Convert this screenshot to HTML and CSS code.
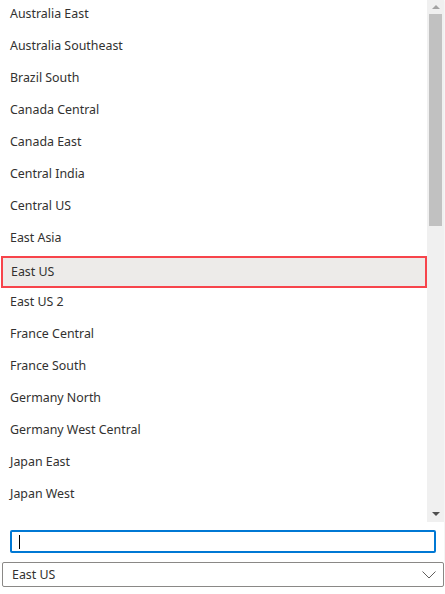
FILE: index.html
```html
<!DOCTYPE html>
<html>
<head>
<meta charset="utf-8">
<link rel="stylesheet" href="styles.css">
</head>
<body>
<div class="panel">
  <div class="listarea">
    <div class="viewport">
      <ul class="list">
        <li class="item">Australia East</li>
        <li class="item">Australia Southeast</li>
        <li class="item">Brazil South</li>
        <li class="item">Canada Central</li>
        <li class="item">Canada East</li>
        <li class="item">Central India</li>
        <li class="item">Central US</li>
        <li class="item">East Asia</li>
        <li class="item selected">East US</li>
        <li class="item">East US 2</li>
        <li class="item">France Central</li>
        <li class="item">France South</li>
        <li class="item">Germany North</li>
        <li class="item">Germany West Central</li>
        <li class="item">Japan East</li>
        <li class="item">Japan West</li>
      </ul>
    </div>
    <div class="scrollbar">
      <div class="arrow up"></div>
      <div class="track"><div class="thumb"></div></div>
      <div class="arrow down"></div>
    </div>
  </div>
  <div class="searchwrap">
    <div class="search"><span class="caret"></span></div>
  </div>
</div>
<div class="dropdown">
  <span class="value">East US</span>
  <svg class="chevron" width="14" height="8" viewBox="0 0 14 8"><path d="M0.5 0.5 L7 7 L13.5 0.5" fill="none" stroke="#605e5c" stroke-width="1"/></svg>
</div>
</body>
</html>
```

FILE: styles.css
```css
html, body {
  margin: 0;
  padding: 0;
  background: #ffffff;
  width: 445px;
  height: 594px;
  overflow: hidden;
  font-family: "Noto Sans", "Open Sans", sans-serif;
  font-size: 12.4px;
  color: #323130;
}

.panel {
  width: 444px;
  height: 562px;
  background: #ffffff;
  box-shadow: 0 0 2px rgba(0, 0, 0, 0.12);
  display: flex;
  flex-direction: column;
}

.listarea {
  display: flex;
  height: 522px;
}

.viewport {
  width: 427px;
  height: 522px;
  overflow: hidden;
}

.list {
  list-style: none;
  margin: -2px 0 0 0;
  padding: 0;
}

.item {
  height: 32px;
  line-height: 32px;
  padding-left: 10px;
  box-sizing: border-box;
  white-space: nowrap;
}

.item.selected {
  background: #edebe9;
  border: 2px solid #f7444b;
  line-height: 28px;
  padding-left: 8px;
  margin-top: 2px;
  margin-bottom: -2px;
  margin-left: 1px;
}

.scrollbar {
  width: 17px;
  height: 522px;
  background: #f0f0f0;
  display: flex;
  flex-direction: column;
}

.arrow {
  height: 14px;
  display: flex;
  align-items: center;
  justify-content: center;
}

.arrow.up::before {
  content: "";
  border-left: 4px solid transparent;
  border-right: 4px solid transparent;
  border-bottom: 4px solid #a3a3a3;
}

.arrow.down {
  height: 17px;
}

.arrow.down::before {
  content: "";
  border-left: 4px solid transparent;
  border-right: 4px solid transparent;
  border-top: 4px solid #505050;
}

.track {
  flex: 1;
  padding: 0 2px;
}

.thumb {
  height: 212px;
  background: #c1c1c1;
}

.searchwrap {
  padding: 8px 8px 0 10px;
}

.search {
  height: 23px;
  border: 2px solid #0078d4;
  border-radius: 2px;
  box-sizing: border-box;
  display: flex;
  align-items: center;
  padding-left: 7px;
}

.caret {
  width: 1px;
  height: 14px;
  background: #000000;
}

.dropdown {
  margin-left: 2px;
  width: 442px;
  height: 25px;
  border: 1px solid #8a8886;
  border-radius: 2px;
  box-sizing: border-box;
  display: flex;
  align-items: center;
  justify-content: space-between;
  padding: 0 7px 0 9px;
  background: #ffffff;
}

.chevron {
  display: block;
}
```
